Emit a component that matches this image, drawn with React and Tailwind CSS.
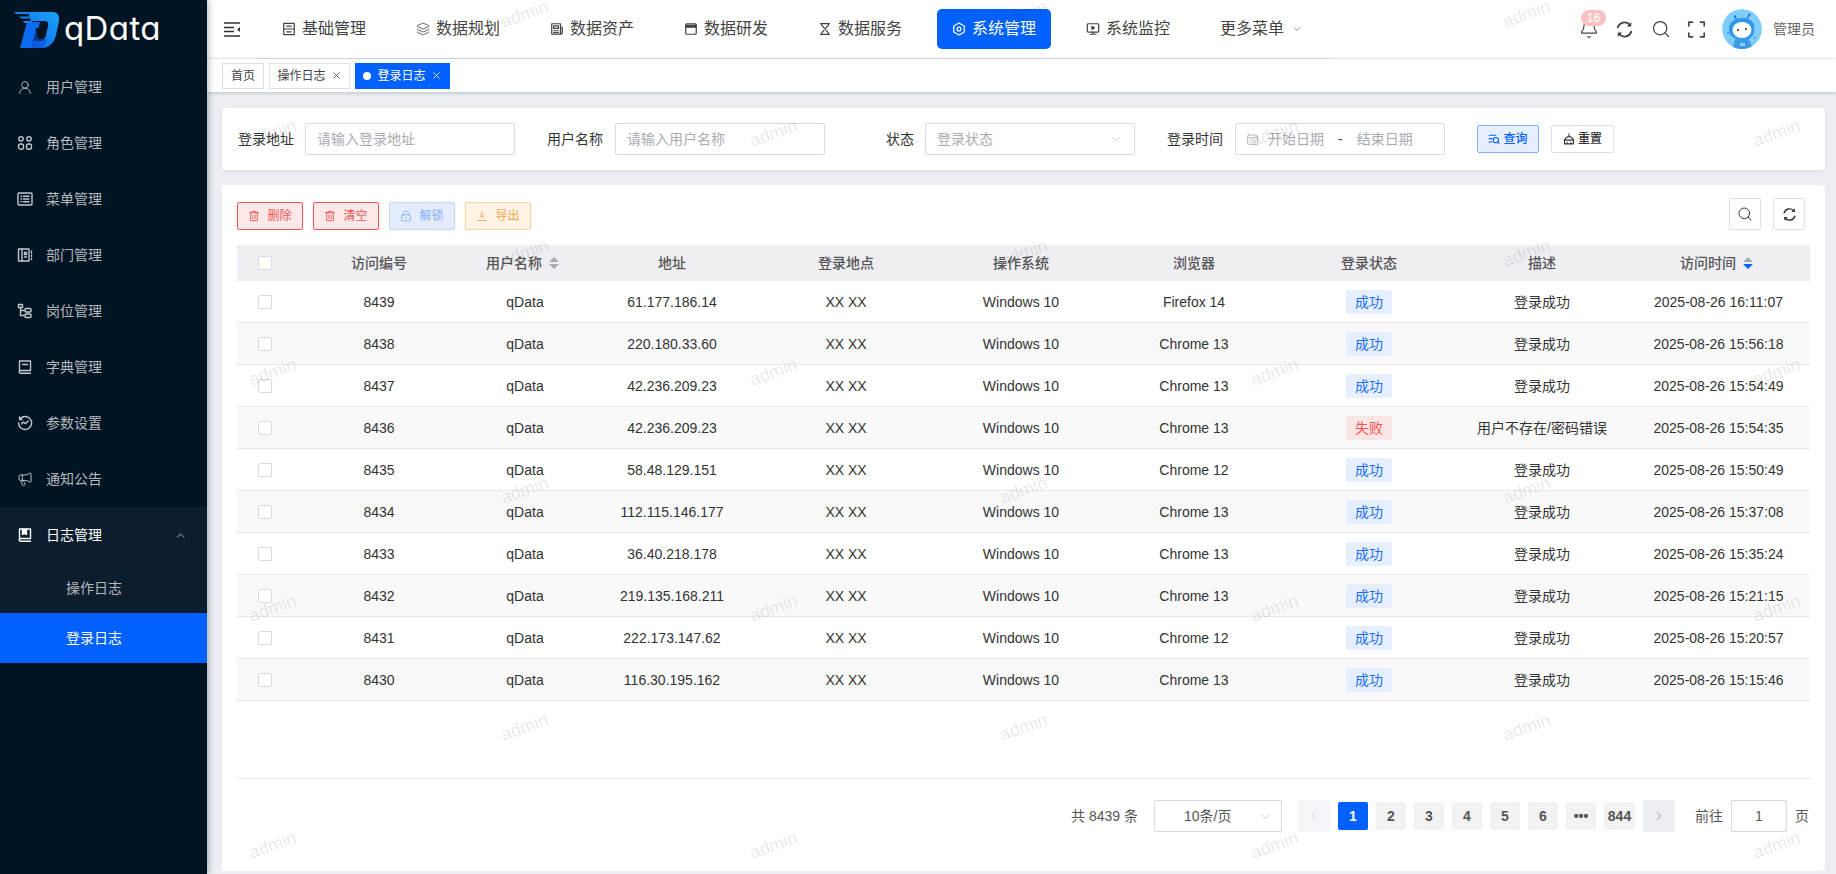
import React from "react";
import { UserRound, Layers, Megaphone, Search, ChevronDown, ChevronUp, ChevronLeft, ChevronRight, Bell, X } from "lucide-react";

const Ic = ({ size = 14, sw = 1.4, children, className = "" }) => (
  <svg width={size} height={size} viewBox="0 0 16 16" fill="none" stroke="currentColor" strokeWidth={sw} strokeLinecap="round" strokeLinejoin="round" className={"shrink-0 " + className}>
    {children}
  </svg>
);

const Roles = (p) => <Ic {...p}><circle cx="4" cy="3.8" r="2.2" /><circle cx="12" cy="3.8" r="2.2" /><rect x="1.5" y="9" width="5" height="5.2" rx="2" /><rect x="9.5" y="9" width="5" height="5.2" rx="2" /></Ic>;
const MenuIc = (p) => <Ic {...p}><rect x="1" y="2" width="14" height="12" rx="1" /><path d="M4 5.2h.6M4 8h.6M4 10.8h.6M6.5 5.2H12M6.5 8H12M6.5 10.8H12" /></Ic>;
const Dept = (p) => <Ic {...p}><rect x="1.5" y="2" width="10.5" height="12" /><path d="M5 2v12M7.5 5.5h2v2h-2zM7.5 10h2M14.5 4v2M14.5 8v1.5M14.5 11.500v1" /></Ic>;
const Tree = (p) => <Ic {...p}><rect x="1.5" y="1.5" width="4" height="3" /><path d="M3.5 4.5v8h4M3.5 7.5h4" /><rect x="8" y="5.5" width="6" height="3.5" rx="1" /><rect x="8" y="11" width="6" height="3.5" rx="1" /></Ic>;
const Dict = (p) => <Ic {...p}><path d="M2.5 12.5V2h11v9.5H3.5a1.3 1.3 0 0 0 0 2.7h10" /><path d="M5.5 5.5h5" /></Ic>;
const Params = (p) => <Ic {...p}><path d="M2.6 4.5A6.5 6.5 0 1 1 1.6 8M2.6 2v2.500h2.400" /><path d="M4.6 8.8 6.500 7l1.800 1.600 3-2.600" /></Ic>;
const LogIc = (p) => <Ic {...p}><path d="M2.5 12.5V2h11v9.5H3.500a1.300 1.300 0 0 0 0 2.700h10" /><path d="M5.5 2v5.500l2-1.400 2 1.400V2" fill="currentColor" /></Ic>;

const BaseIc = (p) => <Ic {...p}><rect x="2" y="1.5" width="12" height="13" /><path d="M2 8h12M5.500 4.800h5M5.500 11.200h5" /></Ic>;
const AssetIc = (p) => <Ic {...p}><path d="M12.500 13.800H2V2h10v11.800a1.700 1.700 0 0 0 2-1.700V6h-2" /><rect x="4.300" y="4.300" width="5.400" height="3" /><path d="M4.300 10h5.400M4.300 12h5.400" /></Ic>;
const DevIc = (p) => <Ic {...p}><rect x="2" y="2" width="12" height="12" rx="1.500" /><path d="M2 3.500h12v2.500H2z" fill="currentColor" /></Ic>;
const Hour = (p) => <Ic {...p}><path d="M3 1.800h10M3 14.200h10M4 1.800v1.400L12 12.800v1.400M12 1.800v1.400L4 12.800v1.400" /></Ic>;
const SysIc = (p) => <Ic {...p}><path d="M8 1.200 14 4.600v6.800L8 14.800 2 11.400V4.600z" /><circle cx="8" cy="8" r="2.200" /></Ic>;
const MonIc = (p) => <Ic {...p}><rect x="1.500" y="2" width="13" height="9.500" rx="1" /><path d="M8 11.500v2.500M4.500 14h7" /><path d="M6.800 5v3.400L9.600 6.700z" fill="currentColor" /></Ic>;
const Refresh = ({ sw = 1.5, ...p }) => <Ic sw={sw} {...p}><path d="M2.300 6.200A6 6 0 0 1 12.300 3.800M13.700 9.800A6 6 0 0 1 3.700 12.200" /><path d="M13.700 1.600v3.800H9.900z" fill="currentColor" stroke="none" /><path d="M2.300 14.400v-3.800h3.800z" fill="currentColor" stroke="none" /></Ic>;
const Full = (p) => <Ic {...p}><path d="M1.500 5V1.800h3.200M11.300 1.800h3.200V5M14.500 11v3.200h-3.200M4.700 14.200H1.500V11" /></Ic>;
const Trash = (p) => <Ic {...p}><path d="M2 3.500h12M5.500 3.500V1.800h5v1.700M3.500 3.500v10.700h9V3.500M6.500 6.500v5M9.500 6.500v5" /></Ic>;
const Lock = (p) => <Ic {...p}><rect x="2" y="6.500" width="12" height="8" rx="1.500" /><path d="M4.800 6.500V4.600a3.200 3.200 0 0 1 6.400 0v1.900M8 9.500v2" /></Ic>;
const Down = (p) => <Ic {...p}><path d="M8 2v7.500M5 6.800l3 3 3-3M2.500 14h11" /></Ic>;
const SearchList = (p) => <Ic {...p}><path d="M1.500 3h9M1.500 7.500h4M1.500 12h4" /><circle cx="10.500" cy="9.500" r="3.500" /><path d="m13 12 1.800 1.800" /></Ic>;
const Broom = (p) => <Ic {...p}><path d="M8 1v4M6 5h4l4 3.500V14.500H2V8.500L6 5zM2 9.500h12M5.500 14.500v-2M10.500 14.500v-2" /></Ic>;
const Cal = (p) => <Ic {...p}><rect x="2" y="2.500" width="12" height="11.500" rx="1" /><path d="M2 6h12M5 9h1M8 9h1M11 9h1M5 11.500h1M8 11.500h1M11 11.500h1" /></Ic>;

const side = [
  ["用户管理", <UserRound size={17} strokeWidth={1.3} />],
  ["角色管理", <Roles size={16} />],
  ["菜单管理", <MenuIc size={16} />],
  ["部门管理", <Dept size={16} />],
  ["岗位管理", <Tree size={16} />],
  ["字典管理", <Dict size={16} />],
  ["参数设置", <Params size={16} />],
  ["通知公告", <Megaphone size={16} strokeWidth={1.4} />],
];

const nav = [
  ["基础管理", <BaseIc />],
  ["数据规划", <Layers size={14} strokeWidth={1.4} />],
  ["数据资产", <AssetIc />],
  ["数据研发", <DevIc />],
  ["数据服务", <Hour />],
  ["系统管理", <SysIc />, true],
  ["系统监控", <MonIc />],
];

const rows = [
  [8439, "61.177.186.14", "Firefox 14", 1, "2025-08-26 16:11:07"],
  [8438, "220.180.33.60", "Chrome 13", 1, "2025-08-26 15:56:18"],
  [8437, "42.236.209.23", "Chrome 13", 1, "2025-08-26 15:54:49"],
  [8436, "42.236.209.23", "Chrome 13", 0, "2025-08-26 15:54:35"],
  [8435, "58.48.129.151", "Chrome 12", 1, "2025-08-26 15:50:49"],
  [8434, "112.115.146.177", "Chrome 13", 1, "2025-08-26 15:37:08"],
  [8433, "36.40.218.178", "Chrome 13", 1, "2025-08-26 15:35:24"],
  [8432, "219.135.168.211", "Chrome 13", 1, "2025-08-26 15:21:15"],
  [8431, "222.173.147.62", "Chrome 12", 1, "2025-08-26 15:20:57"],
  [8430, "116.30.195.162", "Chrome 13", 1, "2025-08-26 15:15:46"],
];

const marks = [];
[14, 253, 490, 727].forEach((y) => [524, 1023, 1526].forEach((x) => marks.push([x, y])));
[133, 372, 608, 845].forEach((y) => [272, 773, 1274, 1776].forEach((x) => marks.push([x, y])));

const Logo = () => (
  <svg width="46" height="36" viewBox="0 0 46 36">
    <defs>
      <linearGradient id="lg" x1="0" y1="1" x2="1" y2="0">
        <stop offset="0" stopColor="#0a63f0" />
        <stop offset="1" stopColor="#1aa6f5" />
      </linearGradient>
    </defs>
    <path d="M14 0h24c5 0 8 3 7 9l-3 14c-2 8-7 13-14 13H7l4-16h9l-2 9h8c3 0 5-2 6-6l2-9c1-3-1-5-3-5H17z" fill="url(#lg)" />
    <path d="M13 10h13l-1.500 6H22l-4 20H6z" fill="#0b6bf2" />
    <path d="M22 16 17 36h9c3 0 5-2 6-5l1-4H24z" fill="#0e4fd6" opacity=".6" />
    <path d="M0 0h16l-1 2H2zM5 4.500h13l-1 2H7zM9 9h9l-1 2h-7z" fill="#1481f5" />
  </svg>
);

const Avatar = () => (
  <svg width="40" height="40" viewBox="0 0 40 40" className="rounded-full shrink-0">
    <circle cx="20" cy="20" r="20" fill="#7fcdf8" />
    <path d="M13 8l2 3M27 6l-2 4" stroke="#2b7fd6" strokeWidth="1.500" fill="none" />
    <circle cx="13" cy="7.500" r="1.200" fill="#2b7fd6" /><circle cx="27.500" cy="5.800" r="1.200" fill="#2b7fd6" />
    <path d="M7 22C6 13 13 9 21 9s13 5 11 14c-1 6-7 9-13 8S8 28 7 22z" fill="#2f97ea" />
    <ellipse cx="20" cy="21" rx="9.500" ry="8" fill="#fff" />
    <circle cx="16" cy="21" r="1.100" fill="#334" /><circle cx="24" cy="20" r="1.100" fill="#334" />
    <path d="M13 30l-3 10h21l-4-10z" fill="#3f9fe8" />
    <path d="M17 33h7v5h-7z" fill="#7fcdf8" stroke="#2b7fd6" />
    <circle cx="6" cy="24" r="1" fill="#2f97ea" /><circle cx="33" cy="29" r="1" fill="#2f97ea" />
  </svg>
);

const Sort = ({ active }) => (
  <span className="inline-flex flex-col gap-[2px] ml-[7px]">
    <span className="w-0 h-0 border-x-[5px] border-x-transparent border-b-[5px] border-b-[#a8abb2]" />
    <span className={"w-0 h-0 border-x-[5px] border-x-transparent border-t-[5px] " + (active ? "border-t-[#0061ff]" : "border-t-[#a8abb2]")} />
  </span>
);

const Check = () => <span className="block w-[14px] h-[14px] mx-auto bg-white border border-[#d8d8e6] rounded-[2px]" />;

const Label = ({ children, cls = "mr-3" }) => <span className={"text-sm text-[#333] whitespace-nowrap shrink-0 " + cls}>{children}</span>;

const Box = ({ children, cls = "px-[11px]" }) => (
  <div className={"w-[210px] h-8 shrink-0 border border-[#d8d8e6] rounded-[2px] bg-white flex items-center text-sm text-[#a8abb2] " + cls}>{children}</div>
);

const ActBtn = ({ cls, icon, label }) => (
  <button className={"w-[66px] h-7 rounded-[2px] border flex items-center justify-center gap-[7px] text-xs " + cls}>
    {icon}{label}
  </button>
);

const Page = ({ n, active, w = "w-[30px]" }) => (
  <span className={"h-7 rounded-[2px] flex items-center justify-center text-sm font-bold " + w + " " + (active ? "bg-[#0061ff] text-white" : "bg-[#f2f2f3] text-[#555]")}>{n}</span>
);

const heads = [["访问编号"], ["用户名称", "s"], ["地址"], ["登录地点"], ["操作系统"], ["浏览器"], ["登录状态"], ["描述"], ["访问时间", "a"]];

export default function App() {
  return (
    <div className="relative flex h-screen w-full overflow-hidden bg-[#ebeef2] font-['Liberation_Sans','Noto_Sans_CJK_SC',sans-serif]">
      <aside className="relative z-10 w-[207px] shrink-0 bg-[#011424] shadow-[2px_0_6px_rgba(0,0,0,0.25)] text-sm text-[#b4b9be]">
        <div className="h-[59px] flex items-center pl-[14px] gap-[4px]">
          <Logo />
          <span className="font-['Inter',sans-serif] [font-feature-settings:'cv11'] text-[33px] leading-none text-white tracking-[0.4px] font-normal -mt-[2px]">qData</span>
        </div>
        {side.map(([t, i]) => (
          <div key={t} className="h-14 flex items-center pl-[17px] gap-[13px]">
            <span className="w-4 flex justify-center text-[#c3c7cb]">{i}</span>
            {t}
          </div>
        ))}
        <div className="bg-[#0c1e2e]">
          <div className="h-14 flex items-center pl-[17px] pr-5 gap-[13px] text-white">
            <span className="w-4 flex justify-center"><LogIc size={16} /></span>
            <span className="flex-1">日志管理</span>
            <ChevronUp size={13} strokeWidth={1.2} />
          </div>
          <div className="h-[50px] flex items-center pl-[66px]">操作日志</div>
          <div className="h-[50px] flex items-center pl-[66px] bg-[#0061ff] text-white">登录日志</div>
        </div>
      </aside>

      <div className="flex-1 min-w-0 flex flex-col">
        <header className="h-[59px] shrink-0 bg-white flex items-stretch border-b border-[#f2f2f4]">
          <div className="w-[50px] flex items-center pl-[17px]">
            <svg width="16" height="15" viewBox="0 0 16 15" fill="none" stroke="#333" strokeWidth="1.500"><path d="M0 1h16M0 5.500h10M0 9.500h10M0 14h16" /><path d="M16 5l-3 2.500 3 2.500z" fill="#333" stroke="none" /></svg>
          </div>
          <nav className="w-[1072px] h-[59px] flex items-center gap-5 pl-[10px] border-b border-[#d9dbea] text-base text-[#444]">
            {nav.map(([t, i, on]) => (
              <div key={t} className={"w-[114px] h-[40px] shrink-0 rounded-[5px] flex items-center justify-center gap-[6px] " + (on ? "bg-[#0061ff] text-white" : "")}>
                {i}{t}
              </div>
            ))}
            <div className="w-[114px] h-[40px] shrink-0 flex items-center pl-[15px] gap-[7px]">
              更多菜单<ChevronDown size={12} strokeWidth={1.2} />
            </div>
          </nav>
          <div className="flex-1 flex items-center justify-end pr-[21px] text-[#444]">
            <div className="relative w-5 h-5 mr-[16px]">
              <Bell size={20} strokeWidth={1.4} />
              <span className="absolute -top-[9px] left-[2px] w-[25px] h-4 rounded-full bg-[#f9c1c4] text-white text-xs leading-4 text-center">16</span>
            </div>
            <Refresh size={19} className="mr-[17px]" />
            <Search size={20} strokeWidth={1.5} className="mr-[16px]" />
            <Full size={19} className="mr-[16px]" />
            <Avatar />
            <span className="ml-[11px] text-sm text-[#666]">管理员</span>
          </div>
        </header>

        <div className="h-[33px] shrink-0 bg-white shadow-[0_1px_4px_rgba(0,0,0,0.2)] relative flex items-center pl-[15px] gap-[5px] text-xs text-[#444]">
          <span className="h-[26px] w-[42px] border border-[#dcdfe6] flex items-center justify-center">首页</span>
          <span className="h-[26px] w-[81px] border border-[#dcdfe6] flex items-center justify-center gap-[5px]">操作日志<X size={11} strokeWidth={1.7} /></span>
          <span className="h-[26px] w-[95px] bg-[#0061ff] text-white flex items-center justify-center gap-[5px]">
            <span className="w-2 h-2 rounded-full bg-white mr-[1px]" />登录日志<X size={11} strokeWidth={1.7} />
          </span>
        </div>

        <main className="flex-1 min-h-0 pl-[15px] pr-[11px] pt-4 pb-[3px] flex flex-col gap-[15px]">
          <section className="h-[62px] shrink-0 bg-white rounded-[3px] shadow-[0_2px_6px_rgba(0,0,0,0.05)] flex items-center pl-[16px]">
            <Label cls="mr-[11px]">登录地址</Label>
            <Box>请输入登录地址</Box>
            <div className="w-8 shrink-0" />
            <Label>用户名称</Label>
            <Box>请输入用户名称</Box>
            <div className="w-[61px] shrink-0" />
            <Label cls="mr-[11px]">状态</Label>
            <Box cls="justify-between pl-[11px] pr-[10px]">登录状态<ChevronDown size={16} strokeWidth={1} className="text-[#b8bac0]" /></Box>
            <div className="w-8 shrink-0" />
            <Label>登录时间</Label>
            <Box cls="pl-[10px]">
              <Cal size={13} sw={1} />
              <span className="ml-[9px] w-14">开始日期</span>
              <span className="ml-[14px] text-[#444]">-</span>
              <span className="ml-[14px]">结束日期</span>
            </Box>
            <button className="ml-8 w-[62px] h-7 rounded-[2px] border border-[#7fb0ff] bg-[#e6efff] text-[#0061ff] text-xs font-medium flex items-center justify-center gap-[3px]"><SearchList size={12} />查询</button>
            <button className="ml-3 w-[63px] h-7 rounded-[2px] border border-[#dcdfe6] bg-white text-[#333] text-xs font-medium flex items-center justify-center gap-[3px]"><Broom size={12} />重置</button>
          </section>

          <section className="flex-1 min-h-0 bg-white rounded-[3px] px-[15px] pt-[13px] flex flex-col">
            <div className="flex items-end justify-between h-8 mb-[15px] shrink-0">
              <div className="flex gap-[10px]">
                <ActBtn cls="border-[#f55252] bg-[#fee8e8] text-[#f55252]" icon={<Trash size={12} sw={1.2} />} label="删除" />
                <ActBtn cls="border-[#f55252] bg-[#fee8e8] text-[#f55252]" icon={<Trash size={12} sw={1.2} />} label="清空" />
                <ActBtn cls="border-[#c4d8fb] bg-[#e4ecfc] text-[#88b0f8]" icon={<Lock size={12} sw={1.2} />} label="解锁" />
                <ActBtn cls="border-[#fad3a0] bg-[#fef3e4] text-[#f3a74c]" icon={<Down size={12} sw={1.2} />} label="导出" />
              </div>
              <div className="flex gap-3 mr-[5px] text-[#333]">
                <button className="w-8 h-8 border border-[#dcdfe6] rounded-[2px] flex items-center justify-center"><Search size={16} strokeWidth={1.5} /></button>
                <button className="w-8 h-8 border border-[#dcdfe6] rounded-[2px] flex items-center justify-center"><Refresh size={15} /></button>
              </div>
            </div>

            <table className="w-full table-fixed border-separate border-spacing-0 text-sm text-[#333]">
              <colgroup>
                <col className="w-[56px]" /><col className="w-[172px]" /><col className="w-[120px]" /><col className="w-[174px]" /><col className="w-[174px]" /><col className="w-[176px]" /><col className="w-[170px]" /><col className="w-[180px]" /><col className="w-[166px]" /><col className="w-[185px]" />
              </colgroup>
              <thead>
                <tr className="h-9 bg-[#eeeef3] text-[#555]">
                  <th className="font-medium"><Check /></th>
                  {heads.map(([t, s]) => (
                    <th key={t} className={"font-medium " + (s === "s" ? "pr-[5px]" : s === "a" ? "pr-[2px]" : "")}>
                      <span className="inline-flex items-center justify-center">{t}{s && <Sort active={s === "a"} />}</span>
                    </th>
                  ))}
                </tr>
              </thead>
              <tbody>
                {rows.map((r, i) => (
                  <tr key={r[0]} className={"h-[42px] text-center [&>td]:border-b [&>td]:border-[#e6e9f0] " + (i % 2 ? "bg-[#f9f9fa]" : "bg-white")}>
                    <td><Check /></td>
                    <td>{r[0]}</td>
                    <td>qData</td>
                    <td>{r[1]}</td>
                    <td>XX XX</td>
                    <td>Windows 10</td>
                    <td>{r[2]}</td>
                    <td>
                      <span className={"inline-block w-[46px] h-6 leading-6 rounded-[2px] " + (r[3] ? "bg-[#e6efff] text-[#1a6dff]" : "bg-[#fbe6e6] text-[#f55252]")}>{r[3] ? "成功" : "失败"}</span>
                    </td>
                    <td>{r[3] ? "登录成功" : "用户不存在/密码错误"}</td>
                    <td className="pl-[2px]">{r[4]}</td>
                  </tr>
                ))}
              </tbody>
            </table>

            <div className="mt-auto mb-[39px] border-t border-[#e6e6ee] pt-[21px] flex items-center justify-end text-sm text-[#555]">
              <span>共 8439 条</span>
              <div className="ml-4 w-[128px] h-8 border border-[#d8d8e6] rounded-[2px] flex items-center justify-between pl-[29px] pr-[8px] text-[#555]">10条/页<ChevronDown size={15} strokeWidth={1} className="text-[#a8abb2]" /></div>
              <span className="ml-4 w-8 h-8 rounded-[2px] bg-[#f3f5f8] flex items-center justify-center text-[#b5b8bf]"><ChevronLeft size={14} strokeWidth={1} /></span>
              <div className="ml-2 flex gap-2 items-center">
                <Page n="1" active /><Page n="2" /><Page n="3" /><Page n="4" /><Page n="5" /><Page n="6" /><Page n="•••" /><Page n="844" w="w-[31px]" />
              </div>
              <span className="ml-2 w-8 h-8 rounded-[2px] bg-[#ebeef2] flex items-center justify-center text-[#555]"><ChevronRight size={14} strokeWidth={1} /></span>
              <span className="ml-5">前往</span>
              <div className="ml-2 w-14 h-8 border border-[#d8d8e6] rounded-[2px] flex items-center justify-center">1</div>
              <span className="ml-2 mr-[1px]">页</span>
            </div>
          </section>
        </main>
      </div>

      {marks.map(([x, y]) => (
        <span key={x + "-" + y} style={{ left: x - 24, top: y - 12 }} className="absolute z-20 pointer-events-none -rotate-[20deg] font-['Liberation_Sans',sans-serif] text-[18px] leading-6 text-black/10 select-none">admin</span>
      ))}
    </div>
  );
}
